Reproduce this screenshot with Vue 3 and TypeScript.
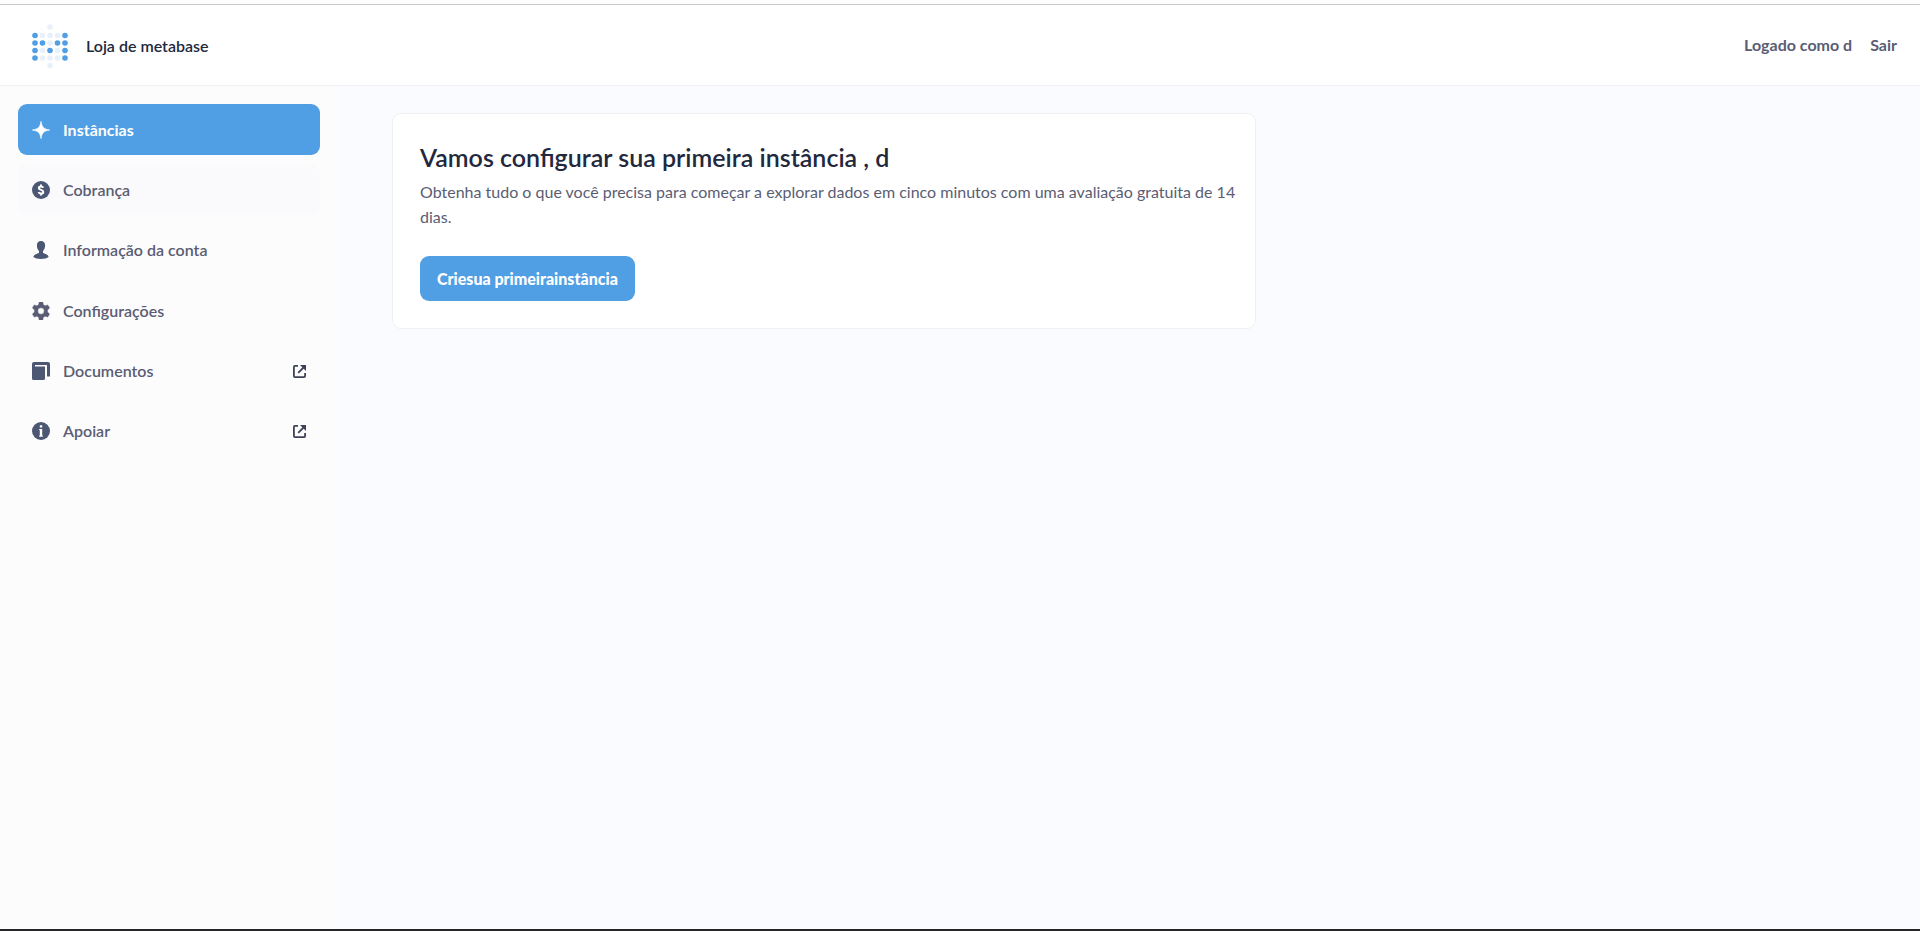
<script setup lang="ts">
type IconName = 'spark' | 'dollar' | 'person' | 'gear' | 'docs' | 'info'

interface NavItem {
  label: string
  icon: IconName
  state?: 'active' | 'hovered'
  external?: boolean
}

interface Dot {
  x: number
  y: number
  on: boolean
}

const items: NavItem[] = [
  { label: 'Instâncias', icon: 'spark', state: 'active' },
  { label: 'Cobrança', icon: 'dollar', state: 'hovered' },
  { label: 'Informação da conta', icon: 'person' },
  { label: 'Configurações', icon: 'gear' },
  { label: 'Documentos', icon: 'docs', external: true },
  { label: 'Apoiar', icon: 'info', external: true },
]

const rows = ['..o..', 'xooox', 'xxoxx', 'xoxox', 'xooox', '..o..']
const dots: Dot[] = rows.flatMap((row, r) =>
  [...row].flatMap((cell, c) =>
    cell === '.' ? [] : [{ x: 3 + c * 7.5, y: (r === 0 ? 3 : r === 5 ? 41.5 : 11.5 + (r - 1) * 7.5), on: cell === 'x' }],
  ),
)
</script>

<template>
  <div class="page">
    <header class="topbar">
      <a class="brand" href="#">
        <svg class="logo" viewBox="0 0 36 45" aria-hidden="true">
          <circle v-for="(d, i) in dots" :key="i" :cx="d.x" :cy="d.y" r="2.8" :class="d.on ? 'dot-on' : 'dot-off'" />
        </svg>
        <span>Loja de metabase</span>
      </a>
      <div class="session">
        <span>Logado como d</span>
        <a href="#">Sair</a>
      </div>
    </header>

    <div class="body">
      <nav class="sidebar">
        <ul>
          <li v-for="item in items" :key="item.label">
            <a href="#" class="nav-link" :class="item.state">
              <svg class="icon" viewBox="0 0 18 18" aria-hidden="true">
                <path v-if="item.icon === 'spark'" d="M9 0.5 C9.7 6 12 8.3 17.5 9 C12 9.7 9.7 12 9 17.5 C8.3 12 6 9.7 0.5 9 C6 8.3 8.3 6 9 0.5 Z" fill="currentColor" stroke="currentColor" stroke-width="0.8" />
                <template v-else-if="item.icon === 'dollar'">
                  <circle cx="9" cy="9" r="9" fill="currentColor" />
                  <path d="M11.3 6.7 C10.9 5.8 10.1 5.4 9 5.4 C7.7 5.4 6.8 6 6.8 7 C6.8 9.4 11.3 8.4 11.3 10.9 C11.3 12 10.3 12.6 9 12.6 C7.8 12.6 6.9 12.2 6.5 11.2 M9 3.6 V5.3 M9 12.8 V14.4" fill="none" stroke="#fff" stroke-width="2" />
                </template>
                <path v-else-if="item.icon === 'person'" d="M9 0 C11.6 0 13.1 1.8 13.1 4.4 C13.1 6.7 12.2 8.8 11 9.9 V11.3 C11 12 11.5 12.2 12.3 12.5 C14.8 13.3 16.4 14.3 16.6 16 C15.2 17.3 12.3 18 9 18 C5.7 18 2.8 17.3 1.4 16 C1.6 14.3 3.2 13.3 5.7 12.5 C6.5 12.2 7 12 7 11.3 V9.9 C5.8 8.8 4.9 6.7 4.9 4.4 C4.9 1.8 6.4 0 9 0 Z" fill="currentColor" />
                <template v-else-if="item.icon === 'gear'">
                  <path fill-rule="evenodd" d="M7.2 0 H10.8 L11.4 2.8 L13.1 3.8 L15.8 2.9 L17.6 6 L15.5 7.9 V10.1 L17.6 12 L15.8 15.1 L13.1 14.2 L11.4 15.2 L10.8 18 H7.2 L6.6 15.2 L4.9 14.2 L2.2 15.1 L0.4 12 L2.5 10.1 V7.9 L0.4 6 L2.2 2.9 L4.9 3.8 L6.6 2.8 Z M9 5.8 A3.2 3.2 0 1 0 9 12.2 A3.2 3.2 0 1 0 9 5.8 Z" fill="#5a5d73" stroke="#5a5d73" stroke-width="0.4" stroke-linejoin="round" />
                </template>
                <template v-else-if="item.icon === 'docs'">
                  <path d="M2 0 H16 Q18 0 18 2 V14.5 H15 V3 H3 V2.4 H0 V2 Q0 0 2 0 Z" fill="currentColor" />
                  <path d="M0 2 H3 V4.5 H13 V16.5 Q13 18 11.5 18 H1.5 Q0 18 0 16.5 Z" fill="currentColor" />
                </template>
                <template v-else>
                  <circle cx="9" cy="9" r="9" fill="currentColor" />
                  <path d="M7.8 3.3 H10.2 V5.5 H7.8 Z M7.2 6.9 H10.2 V13.4 H10.8 V14.7 H7.2 V13.4 H7.8 V8.2 H7.2 Z" fill="#fff" />
                </template>
              </svg>
              <span class="label">{{ item.label }}</span>
              <svg v-if="item.external" class="external" viewBox="0 0 13 13" aria-hidden="true">
                <path d="M5 0.9 H2 Q0.9 0.9 0.9 2 V11 Q0.9 12.1 2 12.1 H11 Q12.1 12.1 12.1 11 V8" fill="none" stroke="currentColor" stroke-width="1.8" />
                <path d="M5.2 7.8 L11 2" fill="none" stroke="currentColor" stroke-width="1.8" />
                <path d="M7 0 H13 V6 Z" fill="currentColor" />
              </svg>
            </a>
          </li>
        </ul>
      </nav>

      <main class="content">
        <section class="card">
          <h1>Vamos configurar sua primeira instância , d</h1>
          <p>
            Obtenha tudo o que você precisa para começar a explorar dados em cinco minutos com uma avaliação gratuita
            de 14 dias.
          </p>
          <button type="button">Criesua primeirainstância</button>
        </section>
      </main>
    </div>
  </div>
</template>

<style>
body {
  margin: 0;
}
</style>

<style scoped>
.page {
  box-sizing: border-box;
  display: flex;
  flex-direction: column;
  min-height: 100vh;
  padding-top: 4px;
  border-bottom: 2px solid #252528;
  background: #fff;
  color: #5a5d73;
  font: 600 16px/24px Lato, "Open Sans", sans-serif;
}

a {
  color: inherit;
  text-decoration: none;
}

.topbar {
  display: flex;
  align-items: center;
  justify-content: space-between;
  box-sizing: border-box;
  min-height: 82px;
  padding: 0 23px 0 32px;
  border-top: 1px solid #c8c8c8;
  border-bottom: 1px solid #f0f1f3;
}

.brand {
  display: flex;
  align-items: center;
  gap: 18px;
  padding-top: 2px;
  color: #22283d;
}

.logo {
  width: 36px;
  height: 45px;
}

.dot-on {
  fill: #509ee3;
}

.dot-off {
  fill: #e8f1fa;
}

.session {
  display: flex;
  gap: 18px;
  font-weight: 700;
}

.body {
  display: flex;
  flex: 1;
}

.sidebar {
  box-sizing: border-box;
  flex: 0 0 338px;
  padding: 18px;
  background: #fcfcfc;
}

.sidebar ul {
  display: flex;
  flex-direction: column;
  justify-content: space-between;
  min-height: 353px;
  margin: 0;
  padding: 0;
  list-style: none;
}

.nav-link {
  display: flex;
  align-items: center;
  box-sizing: border-box;
  min-height: 51px;
  padding: 0 14px;
  border-radius: 9px;
}

.nav-link.active {
  background: #509ee3;
  color: #fff;
  font-weight: 700;
}

.nav-link.hovered {
  background: #fafafc;
}

.icon {
  width: 18px;
  height: 18px;
  margin-right: 13px;
  color: #4c5773;
}

.active .icon {
  color: #fff;
}

.label {
  flex: 1;
}

.external {
  width: 13px;
  height: 13px;
  color: #3c4257;
}

.content {
  flex: 1;
  padding: 27px 54px;
  background: #f9fbff;
}

.card {
  box-sizing: border-box;
  max-width: 864px;
  padding: 26px 12px 27px 27px;
  border: 1px solid #f0f0f2;
  border-radius: 9px;
  background: #fff;
}

h1 {
  margin: 0;
  color: #22283d;
  font-size: 25px;
  font-weight: 600;
  line-height: 34px;
}

p {
  margin: 5px 0 27px;
  font-weight: 400;
  line-height: 25px;
}

button {
  height: 45px;
  padding: 0 17px;
  border: 0;
  border-radius: 9px;
  background: #509ee3;
  color: #fff;
  font: 900 16px/24px Lato, "Open Sans", sans-serif;
}
</style>
